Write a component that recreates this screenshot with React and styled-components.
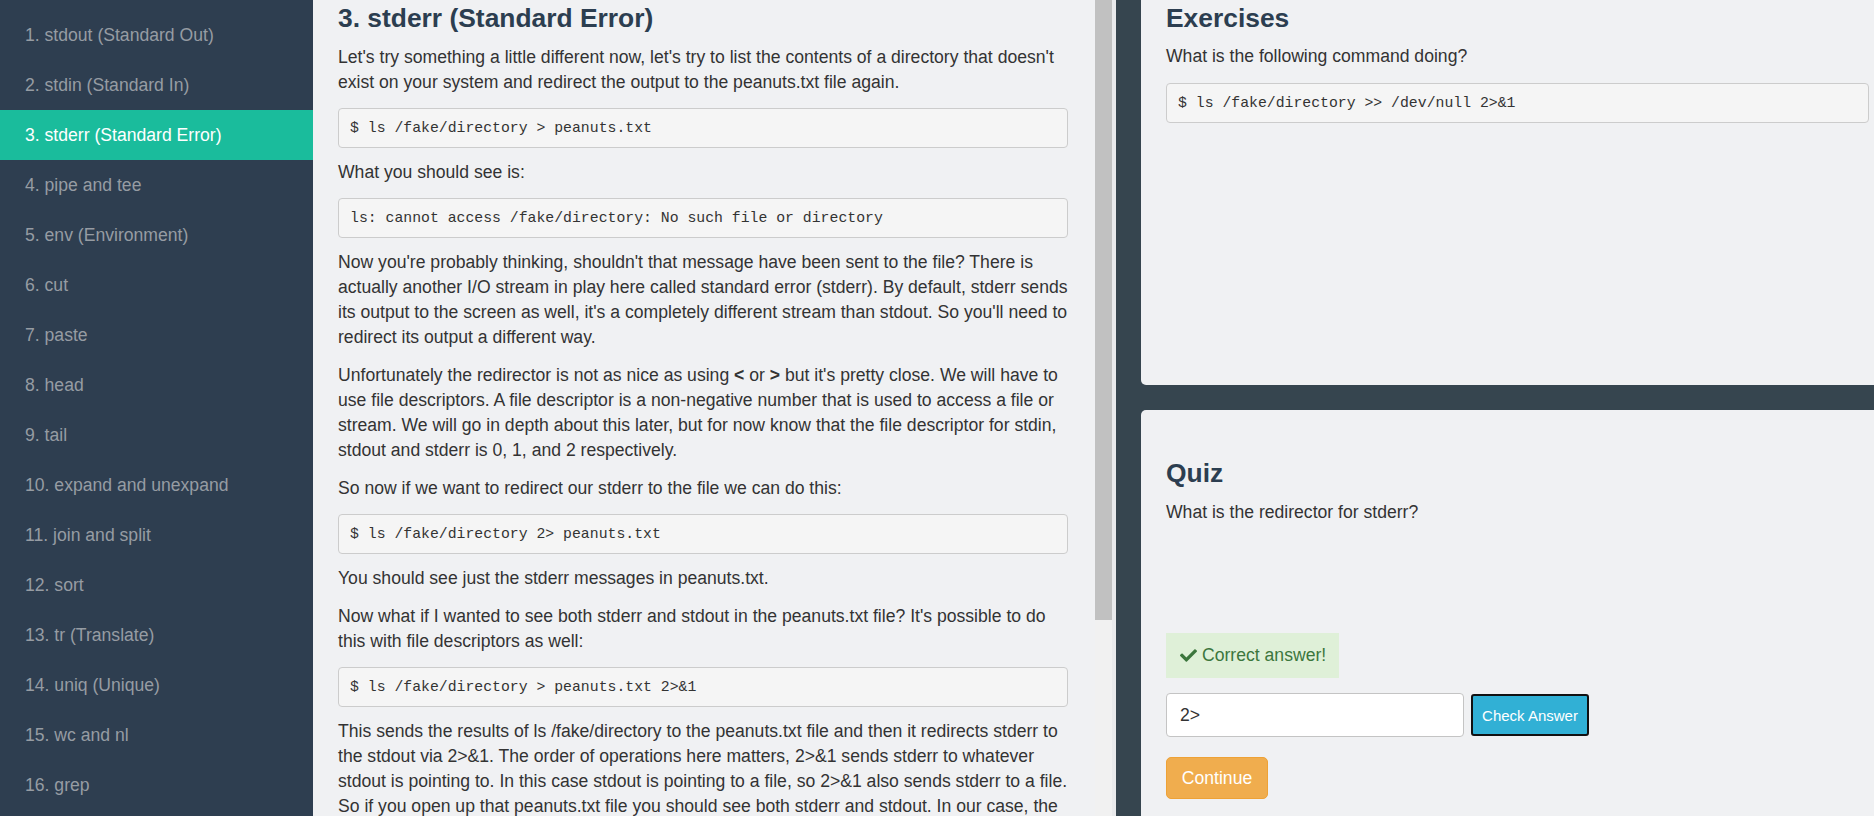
import React from "react";
import styled, { createGlobalStyle } from "styled-components";
import { FaCheck } from "react-icons/fa";

const GlobalStyle = createGlobalStyle`
  html, body {
    margin: 0;
    padding: 0;
    height: 100%;
    overflow: hidden;
    background: #f0f1f3;
  }
  body {
    font-family: "Liberation Sans", Arial, sans-serif;
  }
  * { box-sizing: border-box; }
`;

const Page = styled.div`
  display: flex;
  height: 816px;
  overflow: hidden;
`;

const Sidebar = styled.nav`
  flex: 0 0 313px;
  background: #2e3e50;
  padding-top: 10px;
  overflow: hidden;
`;

const NavItem = styled.div`
  height: 50px;
  line-height: 50px;
  padding: 0 25px;
  font-size: 17.6px;
  white-space: nowrap;
  color: ${(p) => (p.$active ? "#ffffff" : "#969ca3")};
  background: ${(p) => (p.$active ? "#1abc9c" : "transparent")};
`;

const Main = styled.main`
  flex: 0 0 803px;
  display: flex;
  background: #f0f1f3;
  overflow: hidden;
`;

const Article = styled.article`
  flex: 1;
  padding: 4px 27px 0 25px;
  overflow: hidden;
`;

const ScrollTrack = styled.div`
  flex: 0 0 21px;
  background: #f1f1f1;
  border-right: 4px solid #e9eaec;
`;

const ScrollThumb = styled.div`
  width: 17px;
  height: 620px;
  background: #c1c1c1;
`;

const Heading = styled.h2`
  margin: 0 0 ${(p) => p.$mb ?? 12}px;
  font-size: 26.4px;
  line-height: 29px;
  font-weight: bold;
  color: #2c3e50;
`;

const Para = styled.p`
  margin: 0 0 ${(p) => p.$mb ?? 13}px;
  font-size: 17.6px;
  line-height: 25px;
  color: #333333;
`;

const Code = styled.pre`
  margin: 0 0 12px;
  padding: 9px 11px;
  border: 1px solid #cccccc;
  border-radius: 4px;
  background: #f5f5f5;
  font-family: "Liberation Mono", "DejaVu Sans Mono", monospace;
  font-size: 14.8px;
  line-height: 20px;
  color: #333333;
  white-space: pre;
  overflow: hidden;
`;

const Aside = styled.aside`
  flex: 1;
  display: flex;
  flex-direction: column;
  gap: 25px;
  padding-left: 25px;
  background: #36454f;
  overflow: hidden;
`;

const Card = styled.section`
  flex: ${(p) => (p.$grow ? "1" : "0 0 385px")};
  background: #f0f1f3;
  border-radius: ${(p) => (p.$grow ? "5px 0 0 0" : "0 0 0 5px")};
  padding: ${(p) => p.$pt}px 5px 0 25px;
`;

const Alert = styled.div`
  display: inline-flex;
  align-items: center;
  gap: 5px;
  padding: 10px 13px 10px 14px;
  background: #dff0d8;
  color: #3c763d;
  font-size: 17.6px;
  line-height: 25px;
  margin-bottom: 15px;
`;

const AnswerRow = styled.div`
  display: flex;
  align-items: center;
  gap: 7px;
`;

const AnswerInput = styled.input`
  width: 298px;
  height: 44px;
  padding: 0 13px;
  border: 1px solid #c4c4c4;
  border-radius: 4px;
  background: #ffffff;
  font-family: "Liberation Sans", Arial, sans-serif;
  font-size: 17.6px;
  color: #333333;
  outline: none;
`;

const CheckButton = styled.button`
  width: 118px;
  height: 42px;
  padding: 0;
  border: 2px solid #111111;
  border-radius: 3px;
  background: #31b0d5;
  color: #ffffff;
  font-family: "Liberation Sans", Arial, sans-serif;
  font-size: 15px;
`;

const ContinueButton = styled.button`
  margin-top: 20px;
  width: 102px;
  height: 42px;
  padding: 0;
  border: 1px solid #eea236;
  border-radius: 5px;
  background: #f0ad4e;
  color: #ffffff;
  font-family: "Liberation Sans", Arial, sans-serif;
  font-size: 17.6px;
`;

const lessons = [
  "1. stdout (Standard Out)",
  "2. stdin (Standard In)",
  "3. stderr (Standard Error)",
  "4. pipe and tee",
  "5. env (Environment)",
  "6. cut",
  "7. paste",
  "8. head",
  "9. tail",
  "10. expand and unexpand",
  "11. join and split",
  "12. sort",
  "13. tr (Translate)",
  "14. uniq (Unique)",
  "15. wc and nl",
  "16. grep",
  "17. regular expressions (regex)",
];

export default function App() {
  return (
    <>
      <GlobalStyle />
      <Page>
        <Sidebar>
          {lessons.map((l, i) => (
            <NavItem key={l} $active={i === 2}>
              {l}
            </NavItem>
          ))}
        </Sidebar>
        <Main>
          <Article>
            <Heading>3. stderr (Standard Error)</Heading>
            <Para>
              Let's try something a little different now, let's try to list the contents of a
              directory that doesn't exist on your system and redirect the output to the
              peanuts.txt file again.
            </Para>
            <Code>$ ls /fake/directory &gt; peanuts.txt</Code>
            <Para>What you should see is:</Para>
            <Code>ls: cannot access /fake/directory: No such file or directory</Code>
            <Para>
              Now you're probably thinking, shouldn't that message have been sent to the file?
              There is actually another I/O stream in play here called standard error (stderr).
              By default, stderr sends its output to the screen as well, it's a completely
              different stream than stdout. So you'll need to redirect its output a different way.
            </Para>
            <Para>
              Unfortunately the redirector is not as nice as using <b>&lt;</b> or <b>&gt;</b> but
              it's pretty close. We will have to use file descriptors. A file descriptor is a
              non-negative number that is used to access a file or stream. We will go in depth
              about this later, but for now know that the file descriptor for stdin, stdout and
              stderr is 0, 1, and 2 respectively.
            </Para>
            <Para>So now if we want to redirect our stderr to the file we can do this:</Para>
            <Code>$ ls /fake/directory 2&gt; peanuts.txt</Code>
            <Para>You should see just the stderr messages in peanuts.txt.</Para>
            <Para>
              Now what if I wanted to see both stderr and stdout in the peanuts.txt file? It's
              possible to do this with file descriptors as well:
            </Para>
            <Code>$ ls /fake/directory &gt; peanuts.txt 2&gt;&amp;1</Code>
            <Para>
              This sends the results of ls /fake/directory to the peanuts.txt file and then it
              redirects stderr to the stdout via 2&gt;&amp;1. The order of operations here
              matters, 2&gt;&amp;1 sends stderr to whatever stdout is pointing to. In this case
              stdout is pointing to a file, so 2&gt;&amp;1 also sends stderr to a file. So if you
              open up that peanuts.txt file you should see both stderr and stdout. In our case,
              the /fake/directory doesn't exist, so the file only holds the error message.
            </Para>
          </Article>
          <ScrollTrack>
            <ScrollThumb />
          </ScrollTrack>
        </Main>
        <Aside>
          <Card $pt={4}>
            <Heading $mb={11}>Exercises</Heading>
            <Para $mb={14}>What is the following command doing?</Para>
            <Code>$ ls /fake/directory &gt;&gt; /dev/null 2&gt;&amp;1</Code>
          </Card>
          <Card $grow $pt={49}>
            <Heading $mb={12}>Quiz</Heading>
            <Para $mb={108}>What is the redirector for stderr?</Para>
            <Alert>
              <FaCheck size={17} />
              Correct answer!
            </Alert>
            <AnswerRow>
              <AnswerInput defaultValue="2>" />
              <CheckButton>Check Answer</CheckButton>
            </AnswerRow>
            <ContinueButton>Continue</ContinueButton>
          </Card>
        </Aside>
      </Page>
    </>
  );
}
